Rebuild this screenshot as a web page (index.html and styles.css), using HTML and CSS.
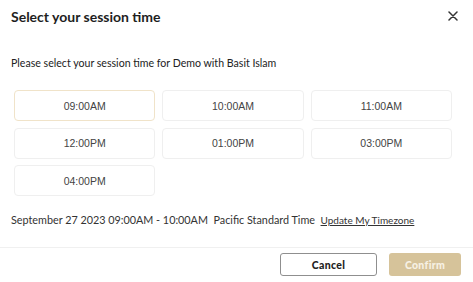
FILE: index.html
```html
<!DOCTYPE html>
<html>
<head>
<meta charset="utf-8">
<link rel="stylesheet" href="styles.css">
</head>
<body>
<div class="modal">
  <div class="header">
    <h1 class="title">Select your session time</h1>
    <button class="close" aria-label="Close">
      <svg width="10" height="10" viewBox="0 0 10 10"><path d="M1 1L9 9M9 1L1 9" stroke="#333" stroke-width="1.5" stroke-linecap="round"/></svg>
    </button>
  </div>
  <div class="body">
    <p class="intro">Please select your session time for Demo with Basit Islam</p>
    <div class="slots">
      <div class="slot selected">09:00AM</div>
      <div class="slot">10:00AM</div>
      <div class="slot">11:00AM</div>
      <div class="slot">12:00PM</div>
      <div class="slot">01:00PM</div>
      <div class="slot">03:00PM</div>
      <div class="slot">04:00PM</div>
    </div>
    <p class="summary">September 27 2023 09:00AM - 10:00AM&nbsp; Pacific Standard Time&nbsp; <a class="tz" href="#">Update My Timezone</a></p>
  </div>
  <div class="footer">
    <button class="btn cancel">Cancel</button>
    <button class="btn confirm">Confirm</button>
  </div>
</div>
</body>
</html>
```
FILE: styles.css
```css
html, body {
  margin: 0;
  padding: 0;
  background: #fff;
}
.modal {
  width: 473px;
  height: 282px;
  font-family: Lato, "Noto Sans", sans-serif;
  color: #222;
  display: flex;
  flex-direction: column;
}
.header {
  display: flex;
  align-items: center;
  justify-content: space-between;
  height: 32px;
  padding: 0 15px 0 11px;
}
.title {
  margin: 0;
  font-size: 14px;
  font-weight: 700;
  color: #1e1e1e;
}
.close {
  border: 0;
  background: none;
  padding: 0;
  width: 10px;
  height: 10px;
  display: flex;
}
.body {
  padding: 0 21px 0 11px;
}
.intro {
  margin: 23px 0 0;
  font-size: 10.6px;
  color: #222;
  line-height: 16px;
}
.slots {
  margin: 19px 0 0 3px;
  display: grid;
  grid-template-columns: repeat(3, 1fr);
  gap: 6.5px 7px;
}
.slot {
  box-sizing: border-box;
  height: 31px;
  border: 1px solid #efefef;
  border-radius: 4px;
  display: flex;
  align-items: center;
  justify-content: center;
  font-family: "Liberation Sans", Arial, sans-serif;
  font-size: 10.5px;
  color: #444;
}
.slot.selected {
  border-color: #f0e3c9;
}
.summary {
  margin: 16px 0 0;
  font-size: 10.8px;
  line-height: 16px;
  color: #333;
}
.tz {
  color: #333;
  text-decoration: underline;
  font-size: 10px;
}
.footer {
  margin-top: auto;
  border-top: 1px solid #f0f0f0;
  display: flex;
  justify-content: flex-end;
  gap: 12px;
  padding: 5px 12px 6px 0;
}
.btn {
  height: 23px;
  border-radius: 3px;
  font-family: Lato, sans-serif;
  font-weight: 900;
  font-size: 10.5px;
  letter-spacing: 0.3px;
}
.cancel {
  width: 97px;
  background: #fff;
  border: 1px solid #8f8f8f;
  color: #222;
}
.confirm {
  width: 72px;
  background: #d6c39a;
  border: 0;
  color: #f7f1e4;
}
```
